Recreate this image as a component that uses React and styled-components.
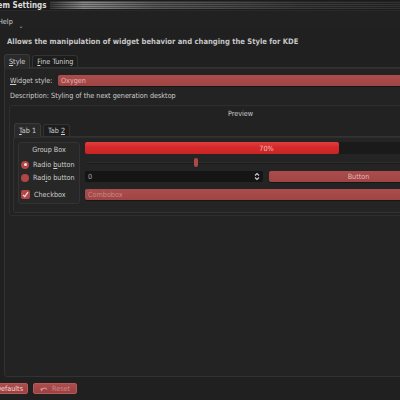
import React from 'react';
import styled, { createGlobalStyle } from 'styled-components';

const GlobalStyle = createGlobalStyle`
  html, body {
    margin: 0;
    padding: 0;
    background: #202020;
  }
  * {
    box-sizing: border-box;
  }
`;

const Viewport = styled.div`
  width: 400px;
  height: 400px;
  overflow: hidden;
  background: #202020;
  font-family: "DejaVu Sans", "Liberation Sans", sans-serif;
  font-stretch: condensed;
  font-size: 7.2px;
  color: #cfcfcf;
`;

const Window = styled.div`
  width: 470px;
  height: 400px;
  display: flex;
  flex-direction: column;
`;

const TitleBar = styled.div`
  height: 11px;
  display: flex;
  align-items: center;
  background: #1b1b1b;
  border-bottom: 1px solid #2a2a2a;
`;

const Title = styled.div`
  margin-left: -20px;
  font-weight: bold;
  font-size: 8px;
  color: #dcdcdc;
  white-space: nowrap;
`;

const Streak = styled.div`
  flex: 1;
  height: 8px;
  margin-left: 4px;
  background:
    repeating-linear-gradient(180deg, rgba(0, 0, 0, 0.35) 0 1px, transparent 1px 2px),
    linear-gradient(90deg, #3a3a3a 0%, #8a8a8a 8%, #5a5a5a 25%, #3a3a3a 60%, #2c2c2c 100%);
`;

const MenuBar = styled.div`
  height: 18px;
  display: flex;
  align-items: flex-start;
  padding-top: 6px;
  background: #212121;
`;

const MenuItem = styled.span`
  margin-left: -2px;
  color: #cfcfcf;
`;

const Chevron = styled.span`
  margin-left: 6px;
  margin-top: 5px;
  font-size: 6px;
  color: #bbb;
`;

const Header = styled.div`
  height: 25px;
  padding-left: 7px;
  display: flex;
  align-items: center;
  font-weight: bold;
  font-size: 7.6px;
  color: #c6c6c6;
  white-space: nowrap;
`;

const TabRow = styled.div`
  display: flex;
  align-items: flex-end;
  gap: 2px;
  padding-left: ${({ $indent }) => $indent}px;
  height: ${({ $height }) => $height}px;
`;

const Tab = styled.div`
  height: ${({ $active }) => ($active ? 14 : 12)}px;
  padding: 0 4px;
  display: flex;
  align-items: center;
  border: 1px solid ${({ $active }) => ($active ? '#3a3a3a' : '#333')};
  border-bottom: none;
  border-radius: 3px 3px 0 0;
  background: ${({ $active }) => ($active ? '#2a2a2a' : '#1d1d1d')};
  color: #d2d2d2;
  white-space: nowrap;
  margin-bottom: ${({ $active }) => ($active ? -1 : 0)}px;
  position: relative;
`;

const Pane = styled.div`
  border: 1px solid #323232;
  border-radius: 3px;
  background: ${({ $bg }) => $bg || '#232323'};
  box-shadow: inset 0 1px 0 #2e2e2e;
`;

const MainPane = styled(Pane)`
  margin-left: 4px;
  height: 310px;
  padding: 7px 0 0 4px;
`;

const FormRow = styled.div`
  display: flex;
  align-items: center;
  height: 11px;
`;

const Label = styled.span`
  width: 49px;
  padding-left: 1px;
  white-space: nowrap;
`;

const RedBox = styled.div`
  flex: ${({ $flex }) => $flex || 'none'};
  height: ${({ $h }) => $h || 11}px;
  display: flex;
  align-items: center;
  justify-content: ${({ $center }) => ($center ? 'center' : 'flex-start')};
  padding-left: ${({ $center }) => ($center ? 0 : 3)}px;
  background: linear-gradient(180deg, #ac4d4d 0%, #9f4444 100%);
  border-radius: 2px;
  box-shadow: 0 1px 0 #161616;
  color: ${({ $dim }) => ($dim ? '#c98989' : '#e4b6b6')};
  white-space: nowrap;
`;

const Description = styled.div`
  height: 19px;
  display: flex;
  align-items: center;
  padding-left: 1px;
  white-space: nowrap;
`;

const PreviewBox = styled.div`
  height: 111px;
  border: 1px solid #2e2e2e;
  border-radius: 3px;
  background: #222;
  padding: 0 0 0 3px;
`;

const PreviewTitle = styled.div`
  height: 14px;
  display: flex;
  align-items: center;
  justify-content: center;
  color: #c8c8c8;
`;

const InnerPane = styled(Pane)`
  height: 77px;
  display: flex;
  gap: 5px;
  padding: 5px 0 0 4px;
  background: #242424;
`;

const GroupBox = styled.div`
  width: 62px;
  height: 62px;
  border: 1px solid #333;
  border-radius: 3px;
  background: #272727;
  display: flex;
  flex-direction: column;
  padding-left: 2px;
`;

const GroupTitle = styled.div`
  height: 13px;
  display: flex;
  align-items: center;
  justify-content: center;
  padding-right: 2px;
`;

const OptionRow = styled.div`
  display: flex;
  align-items: center;
  gap: 4px;
  height: 13px;
  margin-top: ${({ $mt }) => $mt || 0}px;
  white-space: nowrap;
`;

const Radio = styled.span`
  width: 8px;
  height: 8px;
  border-radius: 50%;
  background: #b04646;
  display: flex;
  align-items: center;
  justify-content: center;
  &::after {
    content: '';
    width: 3px;
    height: 3px;
    border-radius: 50%;
    background: ${({ $checked }) => ($checked ? '#f4e4e4' : 'transparent')};
  }
`;

const Check = styled.span`
  width: 9px;
  height: 9px;
  border-radius: 2px;
  background: #b04646;
  display: flex;
  align-items: center;
  justify-content: center;
`;

const Widgets = styled.div`
  width: 363px;
  display: flex;
  flex-direction: column;
`;

const Progress = styled.div`
  height: 12px;
  position: relative;
  background: #1a1a1a;
  border-radius: 2px;
  display: flex;
  align-items: center;
  justify-content: center;
`;

const ProgressFill = styled.div`
  position: absolute;
  left: 0;
  top: 0;
  bottom: 0;
  border-radius: 2px;
  background: linear-gradient(180deg, #e04040 0%, #d62a2a 40%, #c82424 100%);
`;

const ProgressText = styled.span`
  position: relative;
  color: #efc0c0;
`;

const SliderRow = styled.div`
  height: 17px;
  position: relative;
  display: flex;
  align-items: center;
  padding-left: 2px;
`;

const Groove = styled.div`
  flex: 1;
  height: 1px;
  background: #2e2e2e;
  box-shadow: 0 1px 0 #1a1a1a;
`;

const Handle = styled.div`
  position: absolute;
  left: 109px;
  top: 4px;
  width: 4px;
  height: 9px;
  border-radius: 2px;
  background: #b04848;
`;

const Line = styled.div`
  display: flex;
  gap: 6px;
  height: 11px;
  margin-top: ${({ $mt }) => $mt || 0}px;
`;

const SpinBox = styled.div`
  width: 178px;
  height: 11px;
  background: #151515;
  border-radius: 2px;
  display: flex;
  align-items: center;
  justify-content: space-between;
  padding: 0 3px;
  color: #a8a8a8;
`;

const BottomBar = styled.div`
  display: flex;
  gap: 5px;
  margin-top: 6px;
  margin-left: -9px;
`;

const DialogButton = styled.div`
  height: 11px;
  padding: 0 ${({ $pad }) => $pad}px;
  display: flex;
  align-items: center;
  gap: 4px;
  border-radius: 2px;
  background: linear-gradient(180deg, #ad4c4c 0%, #9b4141 100%);
  border: 1px solid #b55a5a;
  color: ${({ $disabled }) => ($disabled ? '#c98a8a' : '#f0d8d8')};
  white-space: nowrap;
`;

const App = () => (
  <Viewport>
    <GlobalStyle />
    <Window>
      <TitleBar>
        <Title>System Settings</Title>
        <Streak />
      </TitleBar>
      <MenuBar>
        <MenuItem>Help</MenuItem>
        <Chevron>⌄</Chevron>
      </MenuBar>
      <Header>Allows the manipulation of widget behavior and changing the Style for KDE</Header>
      <TabRow $indent={4} $height={13}>
        <Tab $active><span><u>S</u>tyle</span></Tab>
        <Tab><span><u>F</u>ine Tuning</span></Tab>
      </TabRow>
      <MainPane>
        <FormRow>
          <Label><u>W</u>idget style:</Label>
          <RedBox $flex="1">Oxygen</RedBox>
        </FormRow>
        <Description>Description: Styling of the next generation desktop</Description>
        <PreviewBox>
          <PreviewTitle>Preview</PreviewTitle>
          <TabRow $indent={1} $height={16}>
            <Tab $active><span><u>T</u>ab 1</span></Tab>
            <Tab><span>Tab <u>2</u></span></Tab>
          </TabRow>
          <InnerPane>
            <GroupBox>
              <GroupTitle>Group Box</GroupTitle>
              <OptionRow $mt={2}>
                <Radio $checked />
                <span>Radio <u>b</u>utton</span>
              </OptionRow>
              <OptionRow>
                <Radio />
                <span>Rad<u>i</u>o button</span>
              </OptionRow>
              <OptionRow $mt={4}>
                <Check>
                  <svg width="7" height="7" viewBox="0 0 7 7">
                    <path d="M1 3.8 L2.8 5.6 L6 1.2" stroke="#f4e4e4" strokeWidth="1.2" fill="none" />
                  </svg>
                </Check>
                <span>Checkbox</span>
              </OptionRow>
            </GroupBox>
            <Widgets>
              <Progress>
                <ProgressFill style={{ width: '70%' }} />
                <ProgressText>70%</ProgressText>
              </Progress>
              <SliderRow>
                <Groove />
                <Handle />
              </SliderRow>
              <Line>
                <SpinBox>
                  <span>0</span>
                  <svg width="6" height="9" viewBox="0 0 6 9">
                    <path d="M1 3.5 L3 1.5 L5 3.5 M1 5.5 L3 7.5 L5 5.5" stroke="#d0d0d0" strokeWidth="1.1" fill="none" />
                  </svg>
                </SpinBox>
                <RedBox $flex="1" $center>Button</RedBox>
              </Line>
              <Line $mt={7}>
                <RedBox $flex="1" $dim>Combobox</RedBox>
              </Line>
            </Widgets>
          </InnerPane>
        </PreviewBox>
      </MainPane>
      <BottomBar>
        <DialogButton $pad={4}>Defaults</DialogButton>
        <DialogButton $pad={6} $disabled>
          <svg width="8" height="6" viewBox="0 0 8 6">
            <path d="M1.5 4.5 A3 3 0 0 1 7 3.5" stroke="#d08f8f" strokeWidth="1.3" fill="none" />
            <path d="M0 2.5 L3 2.5 L1.5 5.5 Z" fill="#d08f8f" />
          </svg>
          Reset
        </DialogButton>
      </BottomBar>
    </Window>
  </Viewport>
);

export default App;
